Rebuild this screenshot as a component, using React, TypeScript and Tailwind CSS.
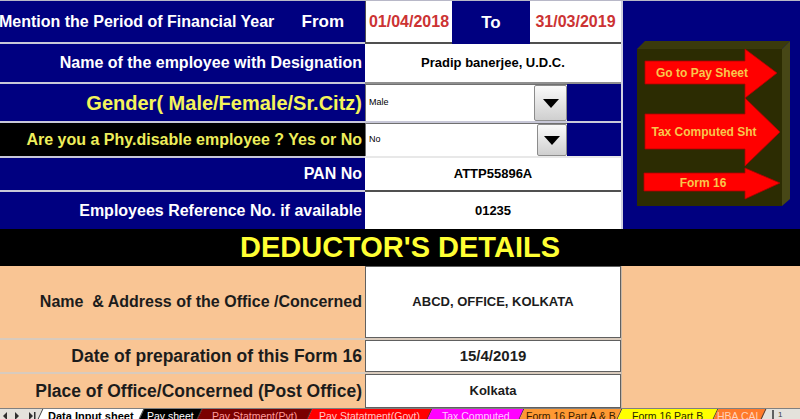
import React from 'react';

const font = "font-['Liberation_Sans',Arial,sans-serif]";

function DropButton({ w }: { w: string }) {
    return (
        <div className={`${w} h-full flex items-center justify-center border border-[#8c8c8c] rounded-[2px] bg-gradient-to-b from-[#fafafa] to-[#cfcfcf]`}>
            <svg width="16" height="9" viewBox="0 0 16 9">
                <path d="M0 0 L16 0 L8 9 Z" fill="#000" />
            </svg>
        </div>
    );
}

function Dropdown({ value, btn }: { value: string; btn: string }) {
    return (
        <div className="flex h-full">
            <div className="w-[202px] h-full bg-white border-t border-l border-[#707070] flex items-center justify-between">
                <span className="pl-[3px] text-[9px] text-black">{value}</span>
                <DropButton w={btn} />
            </div>
            <div className="flex-1 bg-[#000080]" />
        </div>
    );
}

function ArrowPanel() {
    return (
        <svg width="177" height="227" viewBox="0 0 177 227">
            <polygon points="14,48 159,48 159,205 14,205" fill="#2c2c02" />
            <polygon points="14,48 22,40 167,40 159,48" fill="#3a3a0c" />
            <polygon points="159,48 167,40 167,198 159,205" fill="#474716" />
            <polygon points="22,60 122,60 122,48 154,72 122,97 122,83 22,83" fill="#ff0000" stroke="#b00000" strokeWidth="0.8" />
            <polygon points="22,113 122,113 122,97 157,131 122,165 122,148 22,148" fill="#ff0000" stroke="#b00000" strokeWidth="0.8" />
            <polygon points="21,172 122,172 122,167 157,182 122,198 122,190 21,190" fill="#ff0000" stroke="#b00000" strokeWidth="0.8" />
            <g fill="#f8c64c" fontFamily="Liberation Sans, Arial, sans-serif" fontWeight="bold" fontSize="12" textAnchor="middle">
                <text x="79" y="76">Go to Pay Sheet</text>
                <text x="81" y="135">Tax Computed Sht</text>
                <text x="80" y="186">Form 16</text>
            </g>
        </svg>
    );
}

const tabs = [
    { label: 'Pay sheet', cls: 'bg-black text-white w-[58px]' },
    { label: 'Pay Statment(Pvt)', cls: 'bg-[#7a0000] text-[#ff9c9c] w-[110px]' },
    { label: 'Pay Statatment(Govt)', cls: 'bg-[#ff0000] text-[#ffc8c8] w-[120px]' },
    { label: 'Tax Computed', cls: 'bg-[#ff00ff] text-[#ffc8ff] w-[92px]' },
    { label: 'Form 16 Part A & B', cls: 'bg-[#ff9933] text-[#3a1c00] w-[98px]' },
    { label: 'Form 16 Part B', cls: 'bg-[#ffff00] text-[#2a2a00] w-[96px]' },
    { label: 'HBA CAL', cls: 'bg-[#ff7a2a] text-[#ffd2b8] w-[48px]' },
];

function TabBar() {
    return (
        <div className="h-[11px] flex bg-[#e4e2dc] overflow-hidden border-t border-[#808080]">
            <div className="w-[40px] flex items-start gap-[6px] pl-[2px] pt-[2px]">
                <svg width="36" height="9" viewBox="0 0 36 9">
                    <path d="M5 1 L1 5 L5 9 Z" fill="#303030" />
                    <path d="M13 1 L17 5 L13 9 Z" fill="#303030" />
                    <path d="M27 1 L31 5 L27 9 Z" fill="#303030" />
                    <rect x="32" y="1" width="1.5" height="8" fill="#303030" />
                </svg>
            </div>
            <div className="w-[102px] -skew-x-[25deg] bg-white border-l border-r border-[#404040] flex justify-center">
                <span className="skew-x-[25deg] text-[11px] leading-[14px] font-bold text-black">Data Input sheet</span>
            </div>
            {tabs.map((t) => (
                <div key={t.label} className={`${t.cls} -skew-x-[25deg] border-r border-[#404040] flex justify-center`}>
                    <span className="skew-x-[25deg] text-[10.5px] leading-[14px] whitespace-nowrap">{t.label}</span>
                </div>
            ))}
            <div className="flex-1 flex items-start pl-[8px] pt-[1px]">
                <div className="w-[2px] h-[10px] bg-[#606060]" />
                <span className="ml-[4px] text-[8px] leading-[10px] text-[#404040]">1</span>
            </div>
        </div>
    );
}

export default function App() {
    const navyLabel = 'w-[365px] bg-[#000080] border-b-2 border-[#c8c8d8] flex items-center justify-end pr-[3px] text-white font-bold';
    return (
        <div className={`w-[800px] h-[419px] overflow-hidden bg-white ${font}`}>
            <div className="flex h-[229px] border-t border-[#b8b8c8]">
                <div className="w-[621px] flex flex-col">
                    <div className="flex h-[43px]">
                        <div className="w-[365px] bg-[#000080] border-b-2 border-[#c8c8d8] flex items-center justify-between text-white font-bold">
                            <span className="-ml-[1px] text-[16px]">Mention the Period of Financial Year</span>
                            <span className="mr-[21px] text-[17px]">From</span>
                        </div>
                        <div className="w-[87px] bg-white border-b-2 border-l border-[#505050] flex items-center justify-center text-[16px] font-bold text-[#cc3333]">01/04/2018</div>
                        <div className="w-[78px] bg-[#000080] flex items-center justify-center text-[17px] font-bold text-white">To</div>
                        <div className="w-[91px] bg-white border-b-2 border-[#505050] flex items-center justify-center text-[16px] font-bold text-[#cc3333]">31/03/2019</div>
                    </div>
                    <div className="flex h-[40px]">
                        <div className={navyLabel}>
                            <span className="text-[16px]">Name of the employee with Designation</span>
                        </div>
                        <div className="flex-1 bg-white border-b-2 border-[#909090] flex items-center justify-center text-[13px] font-bold text-black">Pradip banerjee, U.D.C.</div>
                    </div>
                    <div className="flex h-[39px]">
                        <div className={navyLabel}>
                            <span className="text-[20px] text-[#f4f45a]">Gender( Male/Female/Sr.Citz)</span>
                        </div>
                        <div className="flex-1 border-b-2 border-[#c8c8d8]">
                            <Dropdown value="Male" btn="w-[33px]" />
                        </div>
                    </div>
                    <div className="flex h-[35px]">
                        <div className="w-[365px] bg-black border-b-2 border-[#c8c8d8] flex items-center justify-end pr-[3px] font-bold">
                            <span className="text-[16px] text-[#eeee5a]">Are you a Phy.disable employee ? Yes or No</span>
                        </div>
                        <div className="flex-1 border-b-2 border-[#e8e8e8]">
                            <Dropdown value="No" btn="w-[30px]" />
                        </div>
                    </div>
                    <div className="flex h-[34px]">
                        <div className={navyLabel}>
                            <span className="text-[16px]">PAN No</span>
                        </div>
                        <div className="flex-1 bg-white border-b-2 border-[#505050] flex items-center justify-center text-[13px] font-bold text-black">ATTP55896A</div>
                    </div>
                    <div className="flex flex-1">
                        <div className="w-[365px] bg-[#000080] flex items-center justify-end pr-[3px] text-white font-bold">
                            <span className="text-[16px]">Employees Reference No. if available</span>
                        </div>
                        <div className="flex-1 bg-white flex items-center justify-center text-[13px] font-bold text-black">01235</div>
                    </div>
                </div>
                <div className="flex-1 bg-[#000080] border-l-2 border-[#d0d0e0]">
                    <ArrowPanel />
                </div>
            </div>
            <div className="h-[37px] bg-black flex items-center justify-center">
                <span className="text-[29px] font-bold text-[#ffff33] leading-none">DEDUCTOR'S DETAILS</span>
            </div>
            <div className="h-[142px] flex bg-[#f9c594]">
                <div className="w-[621px] flex flex-col">
                    <div className="flex h-[74px] border-b-2 border-[#d9cbbd]">
                        <div className="w-[365px] flex items-center justify-end pr-[3px] font-bold text-[#1c1c1c]">
                            <span className="text-[16px]">Name&nbsp; &amp; Address of the Office /Concerned</span>
                        </div>
                        <div className="flex-1 bg-white border border-[#606060] flex items-center justify-center text-[13px] font-bold text-[#1c1c1c]">ABCD, OFFICE, KOLKATA</div>
                    </div>
                    <div className="flex h-[34px] border-b-2 border-[#d9cbbd]">
                        <div className="w-[365px] flex items-center justify-end pr-[3px] font-bold text-[#1c1c1c]">
                            <span className="text-[17.5px]">Date of preparation of this Form 16</span>
                        </div>
                        <div className="flex-1 bg-white border border-[#606060] flex items-center justify-center text-[15px] font-bold text-[#1c1c1c]">15/4/2019</div>
                    </div>
                    <div className="flex flex-1">
                        <div className="w-[365px] flex items-center justify-end pr-[3px] font-bold text-[#1c1c1c]">
                            <span className="text-[17.5px]">Place of Office/Concerned (Post Office)</span>
                        </div>
                        <div className="flex-1 bg-white border border-[#606060] flex items-center justify-center text-[13px] font-bold text-[#1c1c1c]">Kolkata</div>
                    </div>
                </div>
                <div className="flex-1 border-l border-[#c8b8a8]" />
            </div>
            <TabBar />
        </div>
    );
}
